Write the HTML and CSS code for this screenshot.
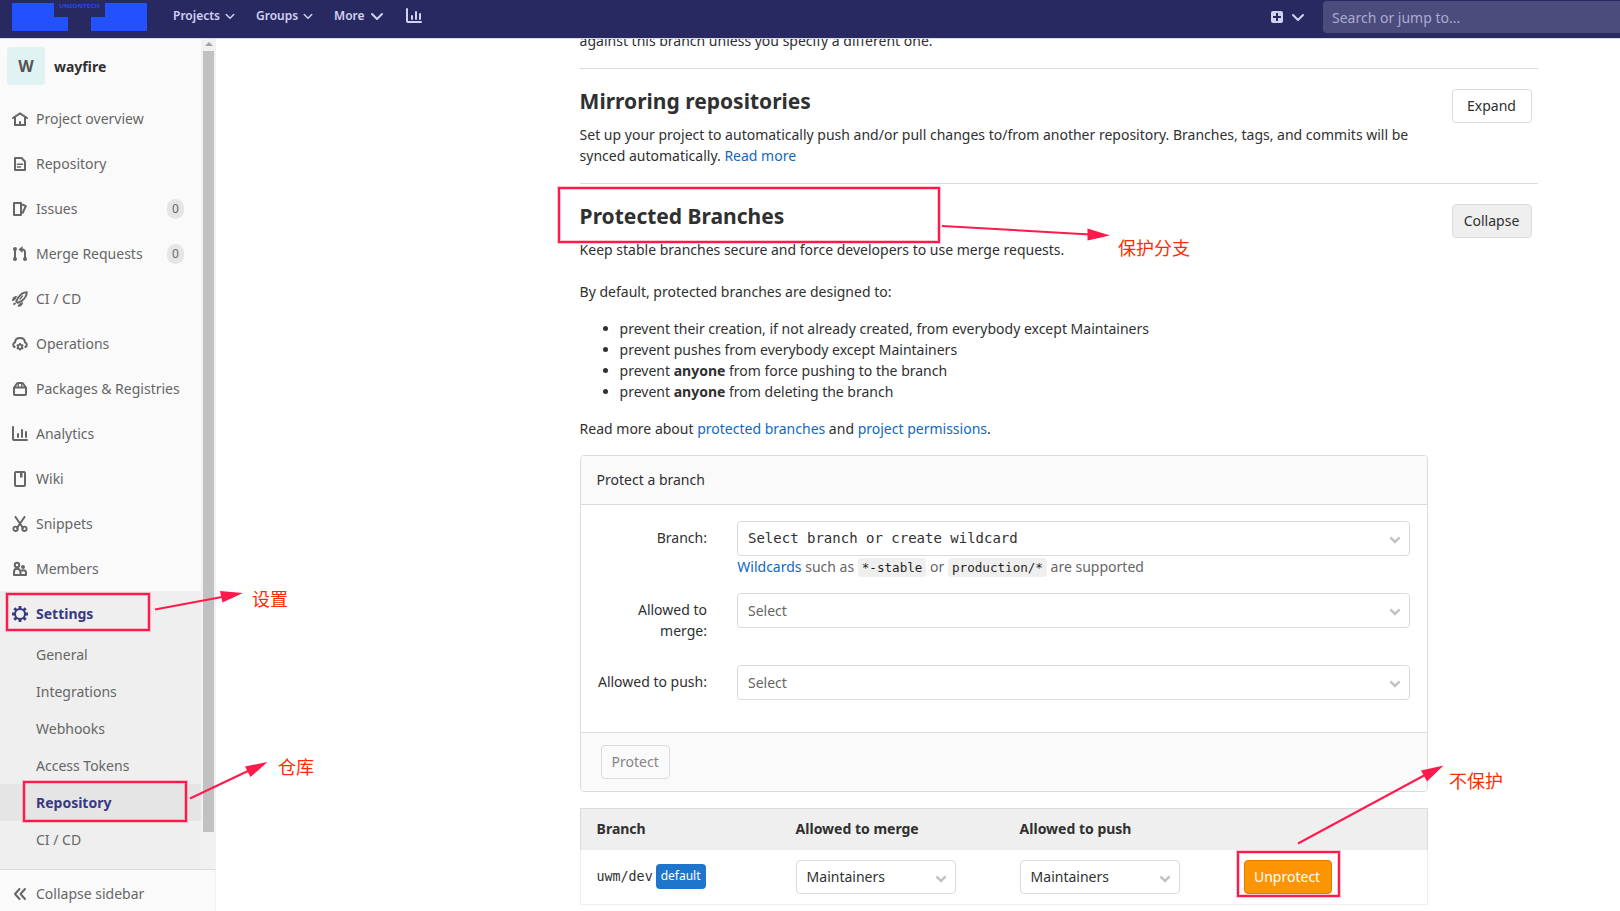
FILE: index.html
```html
<!DOCTYPE html>
<html lang="en">
<head>
<meta charset="utf-8">
<title>Repository Settings · wayfire</title>
<link rel="stylesheet" href="styles.css">
</head>
<body>
<svg class="defs" width="0" height="0">
  <symbol id="chev" viewBox="0 0 16 16"><path d="M3 6l5 5 5-5" fill="none" stroke="currentColor" stroke-width="2" stroke-linecap="round" stroke-linejoin="round"/></symbol>
  <symbol id="caret" viewBox="0 0 12 8"><path d="M1.4 1.4L6 6l4.6-4.6" fill="none" stroke="currentColor" stroke-width="2.6"/></symbol>
  <symbol id="chart" viewBox="0 0 16 16"><path d="M1 1v12.2a.8.8 0 0 0 .8.8H15M6 8v3M10 4v7M14 6v5" fill="none" stroke="currentColor" stroke-width="2" stroke-linecap="round"/></symbol>
</svg>
<header class="navbar">
  <svg class="logo" width="135" height="28" viewBox="0 0 135 28">
    <path fill="#2251ff" d="M1 0H42V14H56V28H1Q0 28 0 27V1Q0 0 1 0ZM93 0H134Q135 0 135 1V27Q135 28 134 28H79V14H93Z"/>
    <text x="47" y="5.200" textLength="41" lengthAdjust="spacingAndGlyphs">UNIONTECH</text>
  </svg>
  <nav class="menu">
    <a class="menu-item projects">Projects<svg class="chev-sm"><use href="#chev"/></svg></a>
    <a class="menu-item groups">Groups<svg class="chev-sm"><use href="#chev"/></svg></a>
    <a class="menu-item more">More<svg class="chev-md"><use href="#chev"/></svg></a>
    <svg class="nav-chart"><use href="#chart"/></svg>
  </nav>
  <div class="create">
    <svg width="12" height="12" viewBox="0 0 12 12"><path fill="currentColor" fill-rule="evenodd" d="M2 0h8a2 2 0 0 1 2 2v8a2 2 0 0 1-2 2H2a2 2 0 0 1-2-2V2a2 2 0 0 1 2-2zm3 2v3H2v2h3v3h2V7h3V5H7V2z"/></svg>
    <svg class="chev-md"><use href="#chev"/></svg>
  </div>
  <div class="search">Search or jump to...</div>
</header>
<div class="page">
  <aside class="sidebar">
    <div class="side-scroll">
      <div class="side-content">
        <div class="context"><span class="avatar">W</span><b>wayfire</b></div>
        <a class="item"><svg viewBox="0 0 16 16"><path d="M1 7l7-4.600L15 7M3 6.500V14h10V6.500" fill="none" stroke="currentColor" stroke-width="2" stroke-linecap="round"/><path d="M7 14v-3a1 1 0 0 1 2 0v3" fill="currentColor"/></svg>Project overview</a>
        <a class="item"><svg viewBox="0 0 16 16"><path d="M3 2h6.500L13 5.500V14H3z" fill="none" stroke="currentColor" stroke-width="2" stroke-linejoin="round"/><path d="M5.500 8.200h5M5.500 11h3" stroke="currentColor" stroke-width="1.600" stroke-linecap="round"/></svg>Repository</a>
        <a class="item"><svg viewBox="0 0 16 16"><path d="M2 2h7v12H2z" fill="none" stroke="currentColor" stroke-width="2" stroke-linejoin="round"/><path d="M10 3.300l3.800 1.900-3.500 7.300" fill="none" stroke="currentColor" stroke-width="2" stroke-linejoin="round"/></svg>Issues<span class="badge">0</span></a>
        <a class="item"><svg viewBox="0 0 16 16"><g fill="currentColor"><circle cx="3" cy="3" r="2"/><circle cx="3" cy="13" r="2"/><circle cx="13" cy="13" r="2"/><path d="M10.500 0v7L6.500 3.500z"/></g><path d="M3 3v10M9 3.500h1.500A2.500 2.500 0 0 1 13 6v7" fill="none" stroke="currentColor" stroke-width="2"/></svg>Merge Requests<span class="badge">0</span></a>
        <a class="item"><svg viewBox="0 0 16 16"><path d="M14.800 1.200C11 1.200 8.500 3 6 6.800L4.200 10.500l1.500 1.300 3.600-1.600C12.900 7.500 14.800 5 14.800 1.200z" fill="none" stroke="currentColor" stroke-width="1.900" stroke-linejoin="round"/><path d="M8 8l2.500-3" stroke="currentColor" stroke-width="1.300" stroke-linecap="round"/><path d="M5 5C2.500 4.800.5 6.300 0 9.200c0 .8.600 1.200 1.300.9L3.500 8.500zM11 11l-3.500 1.400-1.700 2c-.3.800.2 1.600 1.200 1.400C9.800 15.200 11.200 13.500 11 11zM1 12.500l2.200-1 1 1.200-2.400 1.800z" fill="currentColor"/></svg>CI / CD</a>
        <a class="item"><svg viewBox="0 0 16 16"><path d="M2.600 11A2.500 2.500 0 0 1 3 6.400C3.200 3.500 5.300 2 8 2s4.800 1.500 5 4.400A2.500 2.500 0 0 1 13.400 11" fill="none" stroke="currentColor" stroke-width="2" stroke-linecap="round"/><path d="M8 7v7.600M4.700 8.900l6.600 3.800M4.700 12.700l6.600-3.800" stroke="currentColor" stroke-width="1.700"/><circle cx="8" cy="10.800" r="2.100" fill="#fafafa" stroke="currentColor" stroke-width="1.800"/></svg>Operations</a>
        <a class="item"><svg viewBox="0 0 16 16"><path d="M2 6.500h12V13a1 1 0 0 1-1 1H3a1 1 0 0 1-1-1zM2.200 6.500L4.600 3Q5.200 2 6.500 2h3Q10.800 2 11.400 3l2.400 3.500" fill="none" stroke="currentColor" stroke-width="2" stroke-linejoin="round"/><path d="M6.300 2v4M9.700 2v4" stroke="currentColor" stroke-width="1.300"/></svg>Packages &amp; Registries</a>
        <a class="item"><svg><use href="#chart"/></svg>Analytics</a>
        <a class="item"><svg viewBox="0 0 16 16"><path d="M4 1h8q1 0 1 1v12q0 1-1 1H4q-1 0-1-1V2q0-1 1-1z" fill="none" stroke="currentColor" stroke-width="2"/><path d="M8 1h2.500v6L9.250 6 8 7z" fill="currentColor"/></svg>Wiki</a>
        <a class="item"><svg viewBox="0 0 16 16"><path d="M3.500 1L11 12M12.500 1L5 12" stroke="currentColor" stroke-width="2" stroke-linecap="round"/><g fill="none" stroke="currentColor" stroke-width="1.900"><circle cx="3.600" cy="12.800" r="2.200"/><circle cx="12.400" cy="12.800" r="2.200"/></g></svg>Snippets</a>
        <a class="item"><svg viewBox="0 0 16 16"><g fill="none" stroke="currentColor" stroke-width="2"><circle cx="5" cy="4" r="2.200"/><path d="M2 14v-3q0-3.300 3-3.300t3.500 3.300v3z" stroke-linejoin="round"/><path d="M9 14h5v-2.200q0-2.500-2.500-2.500-1.500 0-2.200 1" stroke-linejoin="round"/></g><circle cx="11" cy="6" r="2" fill="currentColor"/></svg>Members</a>
        <div class="group">
          <a class="item active"><svg viewBox="0 0 16 16"><circle cx="8" cy="8" r="5" fill="none" stroke="currentColor" stroke-width="2"/><g stroke="currentColor" stroke-width="2.800"><path d="M8 0v3.500M8 12.500V16M0 8h3.500M12.500 8H16M2.300 2.300l2.200 2.200M11.500 11.500l2.200 2.200M13.700 2.300l-2.200 2.200M4.500 11.500l-2.200 2.200"/></g></svg>Settings</a>
          <a class="sub">General</a>
          <a class="sub">Integrations</a>
          <a class="sub">Webhooks</a>
          <a class="sub">Access Tokens</a>
          <a class="sub current">Repository</a>
          <a class="sub">CI / CD</a>
        </div>
      </div>
      <div class="scrollbar"><i class="up"></i><i class="thumb"></i></div>
    </div>
    <a class="collapse-bar"><svg width="16" height="16" viewBox="0 0 16 16"><path d="M7.500 3L3 8l4.500 5M13 3L8.500 8l4.500 5" fill="none" stroke="currentColor" stroke-width="2" stroke-linecap="round" stroke-linejoin="round"/></svg>Collapse sidebar</a>
  </aside>
  <main class="content">
    <p class="prev">against this branch unless you specify a different one.</p>
    <section class="section mirror">
      <div class="intro">
        <h4>Mirroring repositories</h4>
        <p>Set up your project to automatically push and/or pull changes to/from another repository. Branches, tags, and commits will be synced automatically. <a>Read more</a></p>
      </div>
      <button class="btn toggle">Expand</button>
    </section>
    <section class="section">
      <div class="intro">
        <h4>Protected Branches</h4>
        <p>Keep stable branches secure and force developers to use merge requests.</p>
        <p class="lead">By default, protected branches are designed to:</p>
        <ul>
          <li>prevent their creation, if not already created, from everybody except Maintainers</li>
          <li>prevent pushes from everybody except Maintainers</li>
          <li>prevent <b>anyone</b> from force pushing to the branch</li>
          <li>prevent <b>anyone</b> from deleting the branch</li>
        </ul>
        <p>Read more about <a>protected branches</a> and <a>project permissions</a>.</p>
        <div class="card">
          <div class="card-head">Protect a branch</div>
          <div class="card-body">
            <label>Branch:</label>
            <div>
              <div class="select mono">Select branch or create wildcard<svg><use href="#caret"/></svg></div>
              <div class="help"><a>Wildcards</a> such as <code>*-stable</code> or <code>production/*</code> are supported</div>
            </div>
            <label>Allowed to merge:</label>
            <div class="select muted">Select<svg><use href="#caret"/></svg></div>
            <label>Allowed to push:</label>
            <div class="select muted">Select<svg><use href="#caret"/></svg></div>
          </div>
          <div class="card-foot"><button class="btn disabled">Protect</button></div>
        </div>
        <div class="table">
          <div class="row head"><span>Branch</span><span>Allowed to merge</span><span>Allowed to push</span></div>
          <div class="row body">
            <div class="ref"><span class="ref-name">uwm/dev</span><span class="tag">default</span></div>
            <div class="select small">Maintainers<svg><use href="#caret"/></svg></div>
            <div class="select small">Maintainers<svg><use href="#caret"/></svg></div>
            <button class="btn warning">Unprotect</button>
          </div>
        </div>
      </div>
      <button class="btn toggle open">Collapse</button>
    </section>
  </main>
</div>
<svg class="annotations" width="1620" height="911" viewBox="0 0 1620 911">
  <g class="halo"><rect x="559" y="188" width="380" height="54"/><rect x="7" y="594" width="142" height="36"/><rect x="24" y="782" width="162" height="39"/><rect x="1238" y="852" width="101" height="44"/></g>
  <g class="mark"><rect x="559" y="188" width="380" height="54"/><rect x="7" y="594" width="142" height="36"/><rect x="24" y="782" width="162" height="39"/><rect x="1238" y="852" width="101" height="44"/>
    <path d="M942 226L1090 234.500M155 609.500L222 597M190 798.500L249 770.500M1298 843.500L1425 775"/></g>
  <g class="tips"><path d="M1110 235.500L1087.500 228.500V240.500ZM243 593L220 591L222.500 602.500ZM267.500 762L245 766.500L250.500 777ZM1443.500 765.500L1421 770.500L1427 781.500Z"/></g>
  <g class="notes"><text x="1118" y="255">保护分支</text><text x="252" y="606">设置</text><text x="278" y="774">仓库</text><text x="1449" y="788">不保护</text></g>
</svg>
</body>
</html>
```

FILE: styles.css
```css
* { box-sizing: border-box; }
body { margin: 0; height: 911px; overflow: hidden; background: #fff; color: #303030; font: 14px/21px "Noto Sans", sans-serif; display: flex; flex-direction: column; }
h4, p, ul { margin: 0; }
a { color: #1068bf; }
.defs { position: absolute; }

.navbar { flex: none; height: 39px; background: #292961; border-bottom: 1px solid #dbdbdb; display: flex; align-items: flex-start; color: #d1d1f0; overflow: hidden; }
.logo { margin: 3px 0 0 12px; flex: none; }
.logo text { font: bold 6px "Noto Sans", sans-serif; fill: #2251ff; opacity: .85; }
.menu { flex: none; display: flex; margin-left: 26px; width: 1098px; height: 31px; align-items: center; }
.menu-item { display: flex; align-items: center; color: inherit; font-size: 12px; font-weight: 600; }
.menu-item svg { margin-top: 1px; }
.projects { width: 83px; }
.groups { width: 78px; }
.more { width: 72px; }
.chev-sm { width: 12px; height: 12px; margin-left: 4px; }
.chev-md { width: 16px; height: 16px; margin-left: 4px; }
.nav-chart { width: 16px; height: 16px; }
.create { flex: none; display: flex; align-items: center; height: 34px; width: 51px; }
.create .chev-md { margin-left: 7px; }
.search { flex: none; margin: 1px 0 0 1px; width: 320px; height: 32px; border-radius: 4px; background: #4c4c7c; color: #abaad3; padding-left: 9px; line-height: 33px; }

.page { flex: 1; min-height: 0; display: flex; }
.sidebar { flex: none; width: 216px; display: flex; flex-direction: column; color: #666; }
.side-scroll { flex: 1; min-height: 0; display: flex; }
.side-content { width: 201px; background: #fafafa; display: flex; flex-direction: column; }
.context { height: 57px; padding: 8px 0 0 7px; display: flex; align-items: flex-start; gap: 9px; color: #303030; line-height: 40px; }
.avatar { width: 38px; height: 38px; border-radius: 4px; background: #e0f2f1; color: #555; font-size: 16px; font-weight: bold; line-height: 38px; text-align: center; }
.item { flex: none; height: 45px; padding: 0 17px 0 12px; display: flex; align-items: center; color: #666; }
.item svg { width: 16px; height: 16px; margin-right: 8px; }
.badge { margin-left: auto; width: 17px; height: 20px; border-radius: 9px; background: #e5e5e5; font-size: 12px; line-height: 20px; text-align: center; }
.group { flex: 1; background: #efefef; }
.active { color: #393982; font-weight: 700; }
.sub { display: block; height: 37px; padding-left: 36px; line-height: 37px; color: #666; }
.current { background: #e5e5e5; color: #393982; font-weight: 700; }
.scrollbar { width: 15px; background: #f1f1f1; display: flex; flex-direction: column; align-items: center; }
.up { margin-top: 3px; border: 4px solid transparent; border-top: 0; border-bottom-color: #a0a0a0; }
.thumb { margin-top: 5px; width: 11px; height: 781px; background: #c1c1c1; }
.collapse-bar { height: 42px; border-top: 1px solid #dbdbdb; border-right: 1px solid #efefef; background: #fafafa; padding: 6px 0 0 12px; display: flex; align-items: center; gap: 8px; color: #666; }

.content { margin-left: 363.6px; width: 958.4px; height: 872px; overflow: hidden; }
.prev { margin-top: -9px; height: 38px; }
.section { border-top: 1px solid #dbdbdb; padding: 19px 6px 0 0; display: flex; justify-content: space-between; align-items: flex-start; }
.mirror { height: 115px; }
.intro { width: 848.4px; }
h4 { font-size: 21px; line-height: 26px; font-weight: 700; margin-bottom: 10px; }
.lead { margin: 21px 0 16px; }
ul { padding-left: 40px; margin-bottom: 16px; }
.btn { height: 34px; padding: 0 10px; border: 1px solid #dbdbdb; border-radius: 4px; background: #fff; color: #303030; font: inherit; line-height: 20px; }
.toggle { width: 80px; margin-top: 1px; padding: 0 10px 0 9px; }
.open { background: #efefef; }

.card { margin-top: 16px; border: 1px solid #dbdbdb; border-radius: 4px; overflow: hidden; }
.card-head { height: 49px; padding-left: 16px; line-height: 48px; background: #fafafa; border-bottom: 1px solid #dbdbdb; }
.card-body { height: 227px; padding: 16px 17px 0 16px; display: grid; grid-template-columns: 110.4px 673px; column-gap: 30px; grid-template-rows: 72px 72px 72px; align-items: start; }
label { padding-top: 6px; text-align: right; }
.select { height: 35px; border: 1px solid #dbdbdb; border-radius: 4px; padding: 0 7.5px 0 10px; background: #fff; display: flex; align-items: center; justify-content: space-between; }
.select svg { width: 12px; height: 8px; color: #c4c4c4; margin-top: 2px; }
.mono { font-family: "DejaVu Sans Mono", monospace; }
.muted, .help { color: #666; }
.help { white-space: nowrap; padding-left: .3px; }
code { font: 12.6px "DejaVu Sans Mono", monospace; padding: 2px 4px; border-radius: 4px; background: #efefef; color: #1f1f1f; }
.card-foot { height: 59px; padding: 12px 20px 0; background: #fafafa; border-top: 1px solid #dbdbdb; }
.disabled { display: block; width: 69px; background: #fafafa; color: #868686; }
.table { margin-top: 16px; }
.row { display: grid; grid-template-columns: 199px 224px 224px auto; padding-left: 16px; border: 1px solid #efefef; border-top: 0; }
.head { height: 42px; background: #efefef; border: 1px solid #dbdbdb; border-bottom: 0; line-height: 40px; font-weight: 700; }
.body { height: 55px; padding-top: 10px; align-items: start; }
.ref { display: flex; align-items: center; height: 33px; }
.ref-name { font: 13.3px/20px "DejaVu Sans Mono", monospace; width: 56px; }
.tag { margin-left: 3px; width: 50px; height: 25px; border-radius: 4px; background: #1f75cb; color: #fff; font-size: 12px; line-height: 24px; text-align: center; }
.small { width: 160px; height: 34px; line-height: 20px; padding-bottom: 1px; }
.small svg { margin-top: 4px; }
.warning { width: 88px; padding: 0 10px 0 9px; background: #fc9403; border-color: #de7e00; color: #fff; }

.annotations { position: absolute; left: 0; top: 0; pointer-events: none; }
.halo { fill: none; stroke: #ff1a4b; stroke-opacity: .25; stroke-width: 4; }
.mark { fill: none; stroke: #ff1a4b; stroke-width: 2; }
.tips { fill: #ff1a4b; }
.notes { font: 18px "Noto Sans CJK SC", sans-serif; fill: #ff2a00; }
```
